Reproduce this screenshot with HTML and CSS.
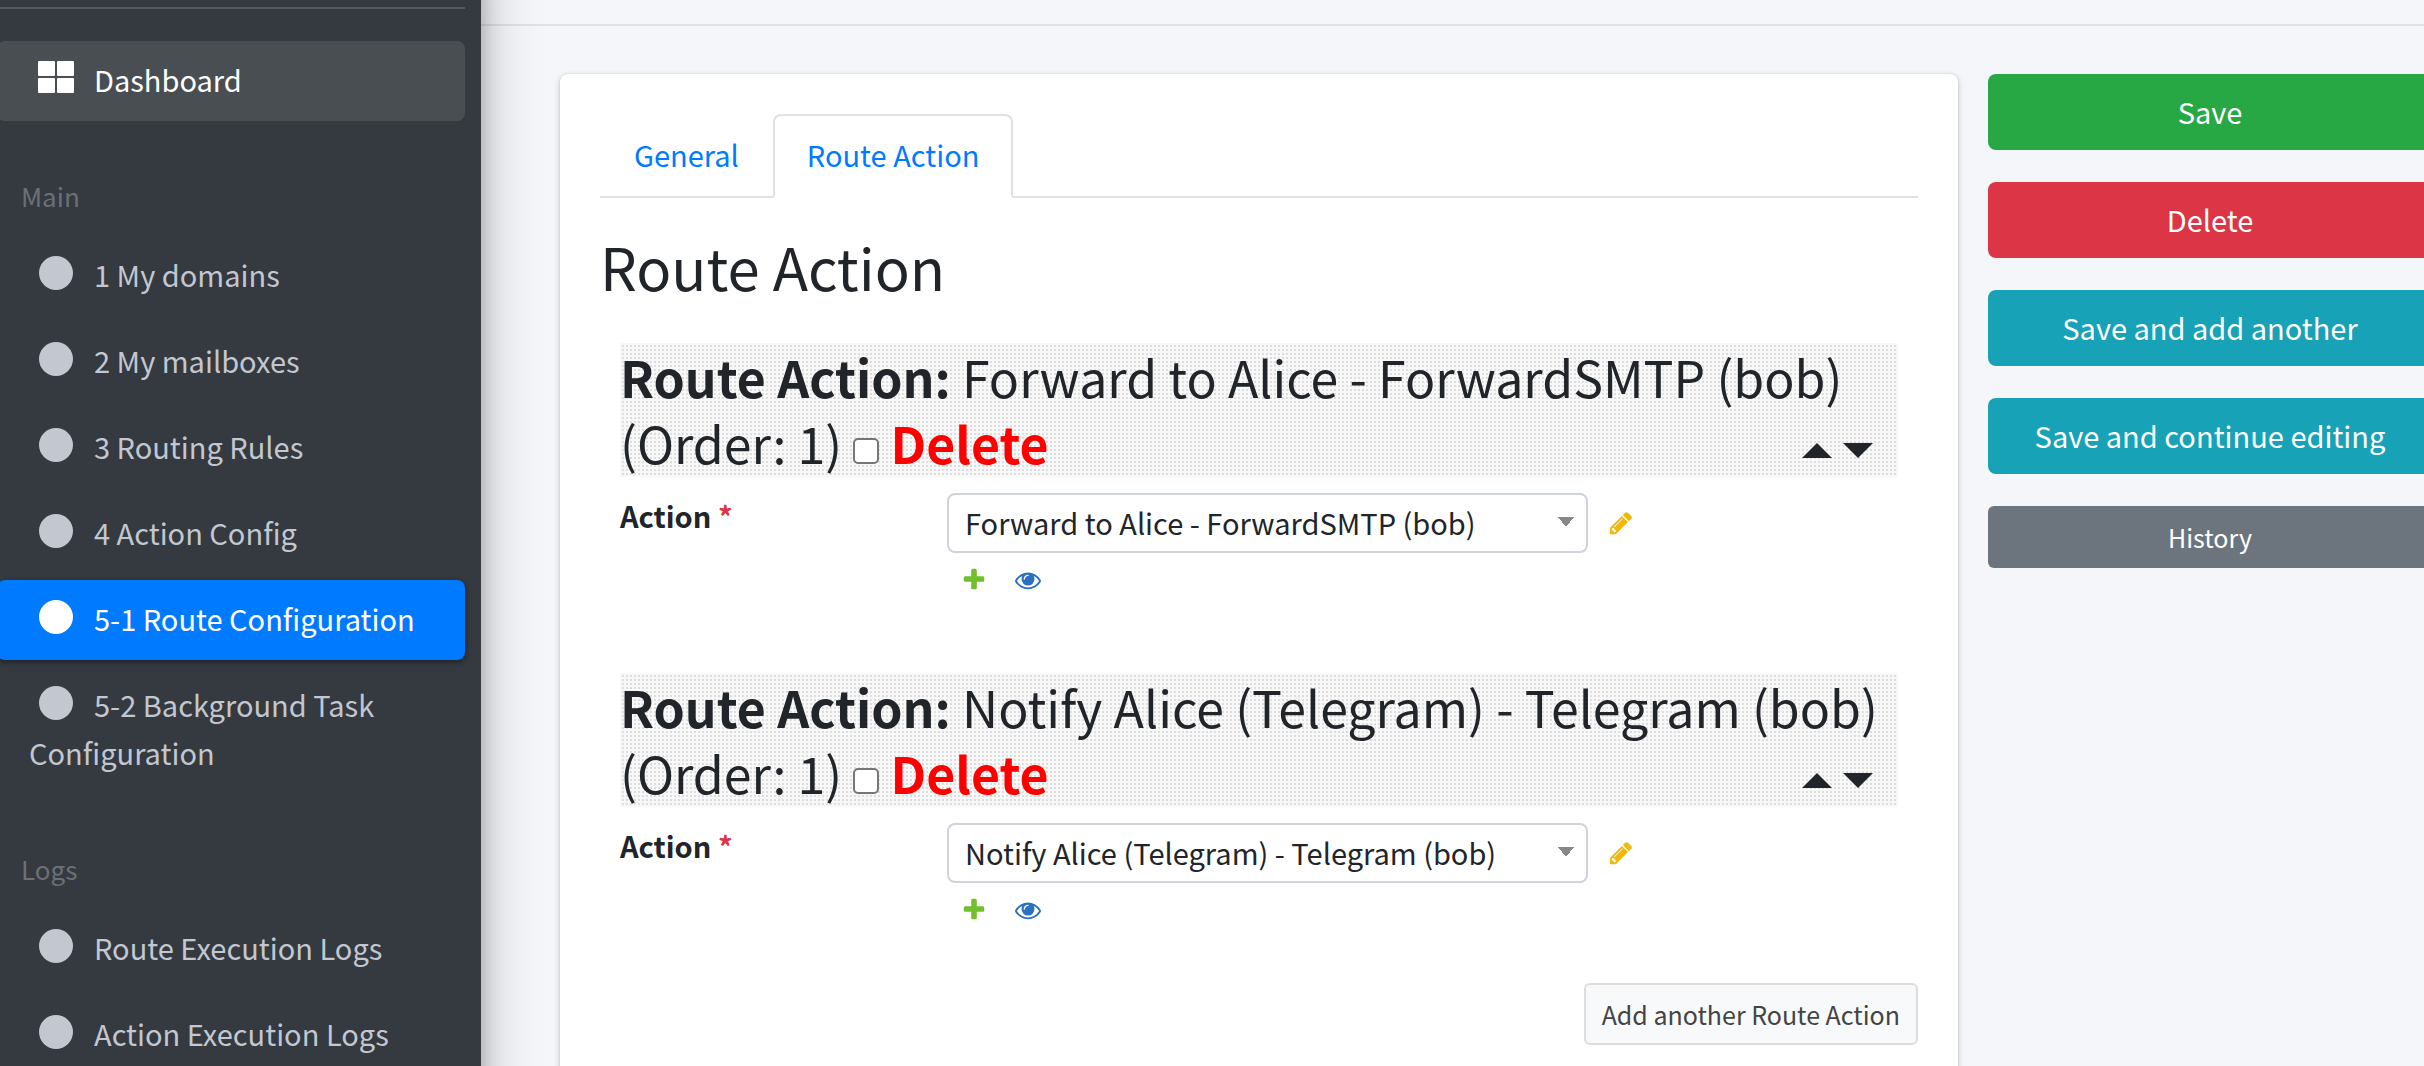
FILE: index.html
```
<!DOCTYPE html>
<html lang="en">
<head>
  <meta charset="UTF-8">
  <title>Route Action</title>
  <link rel="stylesheet" href="styles.css">
</head>
<body>

  <!-- icons -->
  <svg class="sprite" aria-hidden="true">
    <symbol id="icon-grid" viewBox="0 0 36 36">
      <rect x="0" y="1" width="17" height="15" rx="1"/>
      <rect x="19" y="1" width="17" height="15" rx="1"/>
      <rect x="0" y="18" width="17" height="15" rx="1"/>
      <rect x="19" y="18" width="17" height="15" rx="1"/>
    </symbol>
    <symbol id="icon-circle" viewBox="0 0 36 36">
      <circle cx="18" cy="18" r="17"/>
    </symbol>
    <symbol id="icon-pencil" viewBox="0 0 1792 1792">
      <path d="M491 1536l91-91-235-235-91 91v107h128v128h107zm523-928q0-22-22-22-10 0-17 7l-542 542q-7 7-7 17 0 22 22 22 10 0 17-7l542-542q7-7 7-17zm-54-192l416 416-832 832h-416v-416zm683 96q0 53-37 90l-166 166-416-416 166-165q36-38 90-38 53 0 91 38l235 234q37 39 37 91z"/>
    </symbol>
    <symbol id="icon-plus" viewBox="0 0 1792 1792">
      <path d="M1600 736v192q0 40-28 68t-68 28h-416v416q0 40-28 68t-68 28h-192q-40 0-68-28t-28-68v-416h-416q-40 0-68-28t-28-68v-192q0-40 28-68t68-28h416v-416q0-40 28-68t68-28h192q40 0 68 28t28 68v416h416q40 0 68 28t28 68z"/>
    </symbol>
    <symbol id="icon-eye" viewBox="0 0 1792 1792">
      <path d="M1664 960q-152-236-381-353 61 104 61 225 0 185-131.500 316.500t-316.500 131.500-316.500-131.500-131.500-316.500q0-121 61-225-229 117-381 353 133 205 333.500 326.500t434.500 121.500 434.500-121.500 333.500-326.500zm-720-384q0-20-14-34t-34-14q-125 0-214.500 89.500t-89.500 214.500q0 20 14 34t34 14 34-14 14-34q0-86 61-147t147-61q20 0 34-14t14-34zm848 384q0 34-20 69-140 230-376.500 368.500t-499.500 138.500-499.500-139-376.500-368q-20-35-20-69t20-69q140-229 376.500-368t499.500-139 499.500 139 376.500 368q20 35 20 69z"/>
    </symbol>
  </svg>

  <div class="wrapper">
    <aside class="sidebar">
      <nav class="nav-sidebar">
        <a href="#" class="nav-link hover"><svg><use href="#icon-grid"/></svg>Dashboard</a>

        <div class="nav-header">Main</div>
        <a href="#" class="nav-link"><svg><use href="#icon-circle"/></svg>1 My domains</a>
        <a href="#" class="nav-link"><svg><use href="#icon-circle"/></svg>2 My mailboxes</a>
        <a href="#" class="nav-link"><svg><use href="#icon-circle"/></svg>3 Routing Rules</a>
        <a href="#" class="nav-link"><svg><use href="#icon-circle"/></svg>4 Action Config</a>
        <a href="#" class="nav-link active"><svg><use href="#icon-circle"/></svg>5-1 Route Configuration</a>
        <a href="#" class="nav-link"><svg><use href="#icon-circle"/></svg>5-2 Background Task Configuration</a>

        <div class="nav-header">Logs</div>
        <a href="#" class="nav-link"><svg><use href="#icon-circle"/></svg>Route Execution Logs</a>
        <a href="#" class="nav-link"><svg><use href="#icon-circle"/></svg>Action Execution Logs</a>
      </nav>
    </aside>

    <div class="content-wrapper">
      <header class="main-header"></header>

      <form class="content">
        <main class="card">
          <div class="nav-tabs">
            <a href="#" class="tab">General</a>
            <a href="#" class="tab active">Route Action</a>
          </div>

          <h2>Route Action</h2>

          <fieldset class="inline-related">
            <h3>
              <b>Route Action:</b> Forward to Alice - ForwardSMTP (bob) (Order: 1)
              <input type="checkbox" id="delete-0"> <label for="delete-0">Delete</label>
              <span class="order">
                <button type="button" class="up" aria-label="Move up"></button>
                <button type="button" class="down" aria-label="Move down"></button>
              </span>
            </h3>
            <div class="form-row">
              <label for="action-0">Action <span class="required">*</span></label>
              <div class="related-widget">
                <select id="action-0">
                  <option>Forward to Alice - ForwardSMTP (bob)</option>
                </select>
                <a href="#" class="change" aria-label="Change"><svg><use href="#icon-pencil"/></svg></a>
                <div class="links">
                  <a href="#" class="add" aria-label="Add"><svg><use href="#icon-plus"/></svg></a>
                  <a href="#" class="view" aria-label="View"><svg><use href="#icon-eye"/></svg></a>
                </div>
              </div>
            </div>
          </fieldset>

          <fieldset class="inline-related">
            <h3>
              <b>Route Action:</b> Notify Alice (Telegram) - Telegram (bob) (Order: 1)
              <input type="checkbox" id="delete-1"> <label for="delete-1">Delete</label>
              <span class="order">
                <button type="button" class="up" aria-label="Move up"></button>
                <button type="button" class="down" aria-label="Move down"></button>
              </span>
            </h3>
            <div class="form-row">
              <label for="action-1">Action <span class="required">*</span></label>
              <div class="related-widget">
                <select id="action-1">
                  <option>Notify Alice (Telegram) - Telegram (bob)</option>
                </select>
                <a href="#" class="change" aria-label="Change"><svg><use href="#icon-pencil"/></svg></a>
                <div class="links">
                  <a href="#" class="add" aria-label="Add"><svg><use href="#icon-plus"/></svg></a>
                  <a href="#" class="view" aria-label="View"><svg><use href="#icon-eye"/></svg></a>
                </div>
              </div>
            </div>
          </fieldset>

          <div class="add-row">
            <button type="button">Add another Route Action</button>
          </div>
        </main>

        <div class="actions">
          <button type="submit" class="btn btn-success">Save</button>
          <button type="button" class="btn btn-danger">Delete</button>
          <button type="submit" class="btn btn-info">Save and add another</button>
          <button type="submit" class="btn btn-info">Save and continue editing</button>
          <button type="button" class="btn btn-secondary">History</button>
        </div>
      </form>
    </div>
  </div>

</body>
</html>
```
FILE: styles.css
```
* {
  box-sizing: border-box;
}
body {
  margin: 0;
  font-family: "Source Sans Pro", "Noto Sans CJK SC", sans-serif;
  font-size: 29px;
  line-height: 48px;
  color: #212529;
  background-color: #f4f6f9;
  overflow: hidden;
}
a {
  color: #007bff;
  text-decoration: none;
}
button, select, input {
  font: inherit;
}
button {
  cursor: pointer;
}
.sprite {
  display: none;
}
.wrapper {
  display: flex;
  height: 100vh;
}

/* Sidebar */
.sidebar {
  flex: 0 0 481px;
  margin: -80px 0;
  padding: 87px 16px 0 0;
  background-color: #343a40;
  box-shadow: 0 28px 56px rgba(0,0,0,0.25), 0 20px 20px rgba(0,0,0,0.22);
  z-index: 1;
}
.nav-sidebar {
  display: flex;
  flex-direction: column;
  gap: 6px;
  margin-left: -3px;
  padding-top: 32px;
  border-top: 2px solid #4f5962;
}
.nav-link {
  padding: 14px 32px 18px;
  border-radius: 8px;
  color: #c2c7d0;
}
.nav-link svg {
  width: 36px;
  height: 36px;
  margin: 0 20px 0 9px;
  vertical-align: -4px;
  fill: currentColor;
}
.nav-link.hover {
  background-color: #494e53;
  color: #fff;
}
.nav-link.active {
  background-color: #007bff;
  color: #fff;
  box-shadow: 0 2px 6px rgba(0,0,0,0.24), 0 2px 4px rgba(0,0,0,0.24);
}
.nav-header {
  padding: 45px 24px 10px;
  font-size: 26px;
  color: #6c7075;
}

/* Content */
.content-wrapper {
  flex: 1;
  min-width: 0;
}
.main-header {
  height: 26px;
  border-bottom: 2px solid #dee2e6;
}
.content {
  display: flex;
  gap: 30px;
  margin-right: -8px;
  padding: 48px 0 0 79px;
}
.card {
  flex: 1;
  min-width: 0;
  min-height: 100vh;
  padding: 40px;
  background-color: #fff;
  border-radius: 8px;
  box-shadow: 0 0 2px rgba(0,0,0,0.13), 0 2px 6px rgba(0,0,0,0.2);
}
.nav-tabs {
  display: flex;
  border-bottom: 2px solid #dee2e6;
}
.tab {
  margin-bottom: -2px;
  padding: 14px 32px 18px;
  border: 2px solid transparent;
  border-radius: 8px 8px 0 0;
}
.tab.active {
  background-color: #fff;
  border-color: #dee2e6 #dee2e6 #fff;
}
.card h2 {
  margin: 30px 0 38px;
  font-size: 58px;
  font-weight: 400;
  line-height: 77px;
}
.inline-related {
  margin: 80px 20px 60px;
  padding: 0;
  border: none;
}
.card h2 + .inline-related {
  margin-top: 0;
}
.inline-related h3 {
  position: relative;
  margin: 0 0 16px;
  padding-bottom: 2px;
  font-size: 50px;
  font-weight: 400;
  line-height: 66px;
  background: #f8f8f8 conic-gradient(transparent 25%, #ddd 0 50%, transparent 0) 0 0 / 4px 4px;
}
.inline-related h3 label {
  color: #f00;
  font-weight: 700;
}
.inline-related h3 input {
  width: 26px;
  height: 26px;
  margin: 0;
  border: 2px solid #767676;
  border-radius: 5px;
  background-color: #fff;
  appearance: none;
}
.inline-related h3 input:checked {
  background-color: #007bff;
}
.order {
  position: absolute;
  right: 25px;
  bottom: 19px;
  display: flex;
  gap: 11px;
}
.order button {
  width: 30px;
  height: 15px;
  padding: 0;
  border: none;
  background-color: #212529;
}
.order .up {
  clip-path: polygon(50% 0, 100% 100%, 0 100%);
}
.order .down {
  clip-path: polygon(0 0, 100% 0, 50% 100%);
}
.form-row {
  display: flex;
}
.form-row > label {
  flex: 0 0 327px;
  font-weight: 700;
  line-height: 45px;
}
.required {
  color: #dc3545;
}
.related-widget {
  display: grid;
  grid-template-columns: 641px auto;
  align-items: center;
  column-gap: 20px;
}
.related-widget svg {
  display: block;
  width: 26px;
  height: 26px;
  fill: currentColor;
}
.related-widget select {
  height: 60px;
  padding: 0 16px 3px;
  border: 2px solid #ced4da;
  border-radius: 8px;
  color: #212529;
  appearance: none;
  background: #fff conic-gradient(from -39deg at 50% 100%, #888 78deg, transparent 0) right 12px top 22px / 16px 10px no-repeat;
}
.links {
  display: flex;
  gap: 28px;
  padding: 14px 14px 0;
}
.change {
  color: #efb80b;
}
.add {
  color: #70bf2b;
}
.view {
  color: #2b70bf;
}
.add-row {
  text-align: right;
}
.add-row button {
  height: 62px;
  padding: 0 16px;
  border: 2px solid #ddd;
  border-radius: 6px;
  background-color: #f8f9fa;
  color: #444;
  font-size: 25px;
}

/* Buttons on the right */
.actions {
  display: flex;
  flex: 0 0 444px;
  flex-direction: column;
  gap: 32px;
}
.btn {
  height: 76px;
  padding: 0 0 3px;
  border: none;
  border-radius: 8px;
  color: #fff;
}
.btn-success {
  background-color: #28a745;
}
.btn-danger {
  background-color: #dc3545;
}
.btn-info {
  background-color: #17a2b8;
}
.btn-secondary {
  height: 62px;
  padding: 0;
  border-radius: 6px;
  background-color: #6c757d;
  font-size: 25px;
}
```
